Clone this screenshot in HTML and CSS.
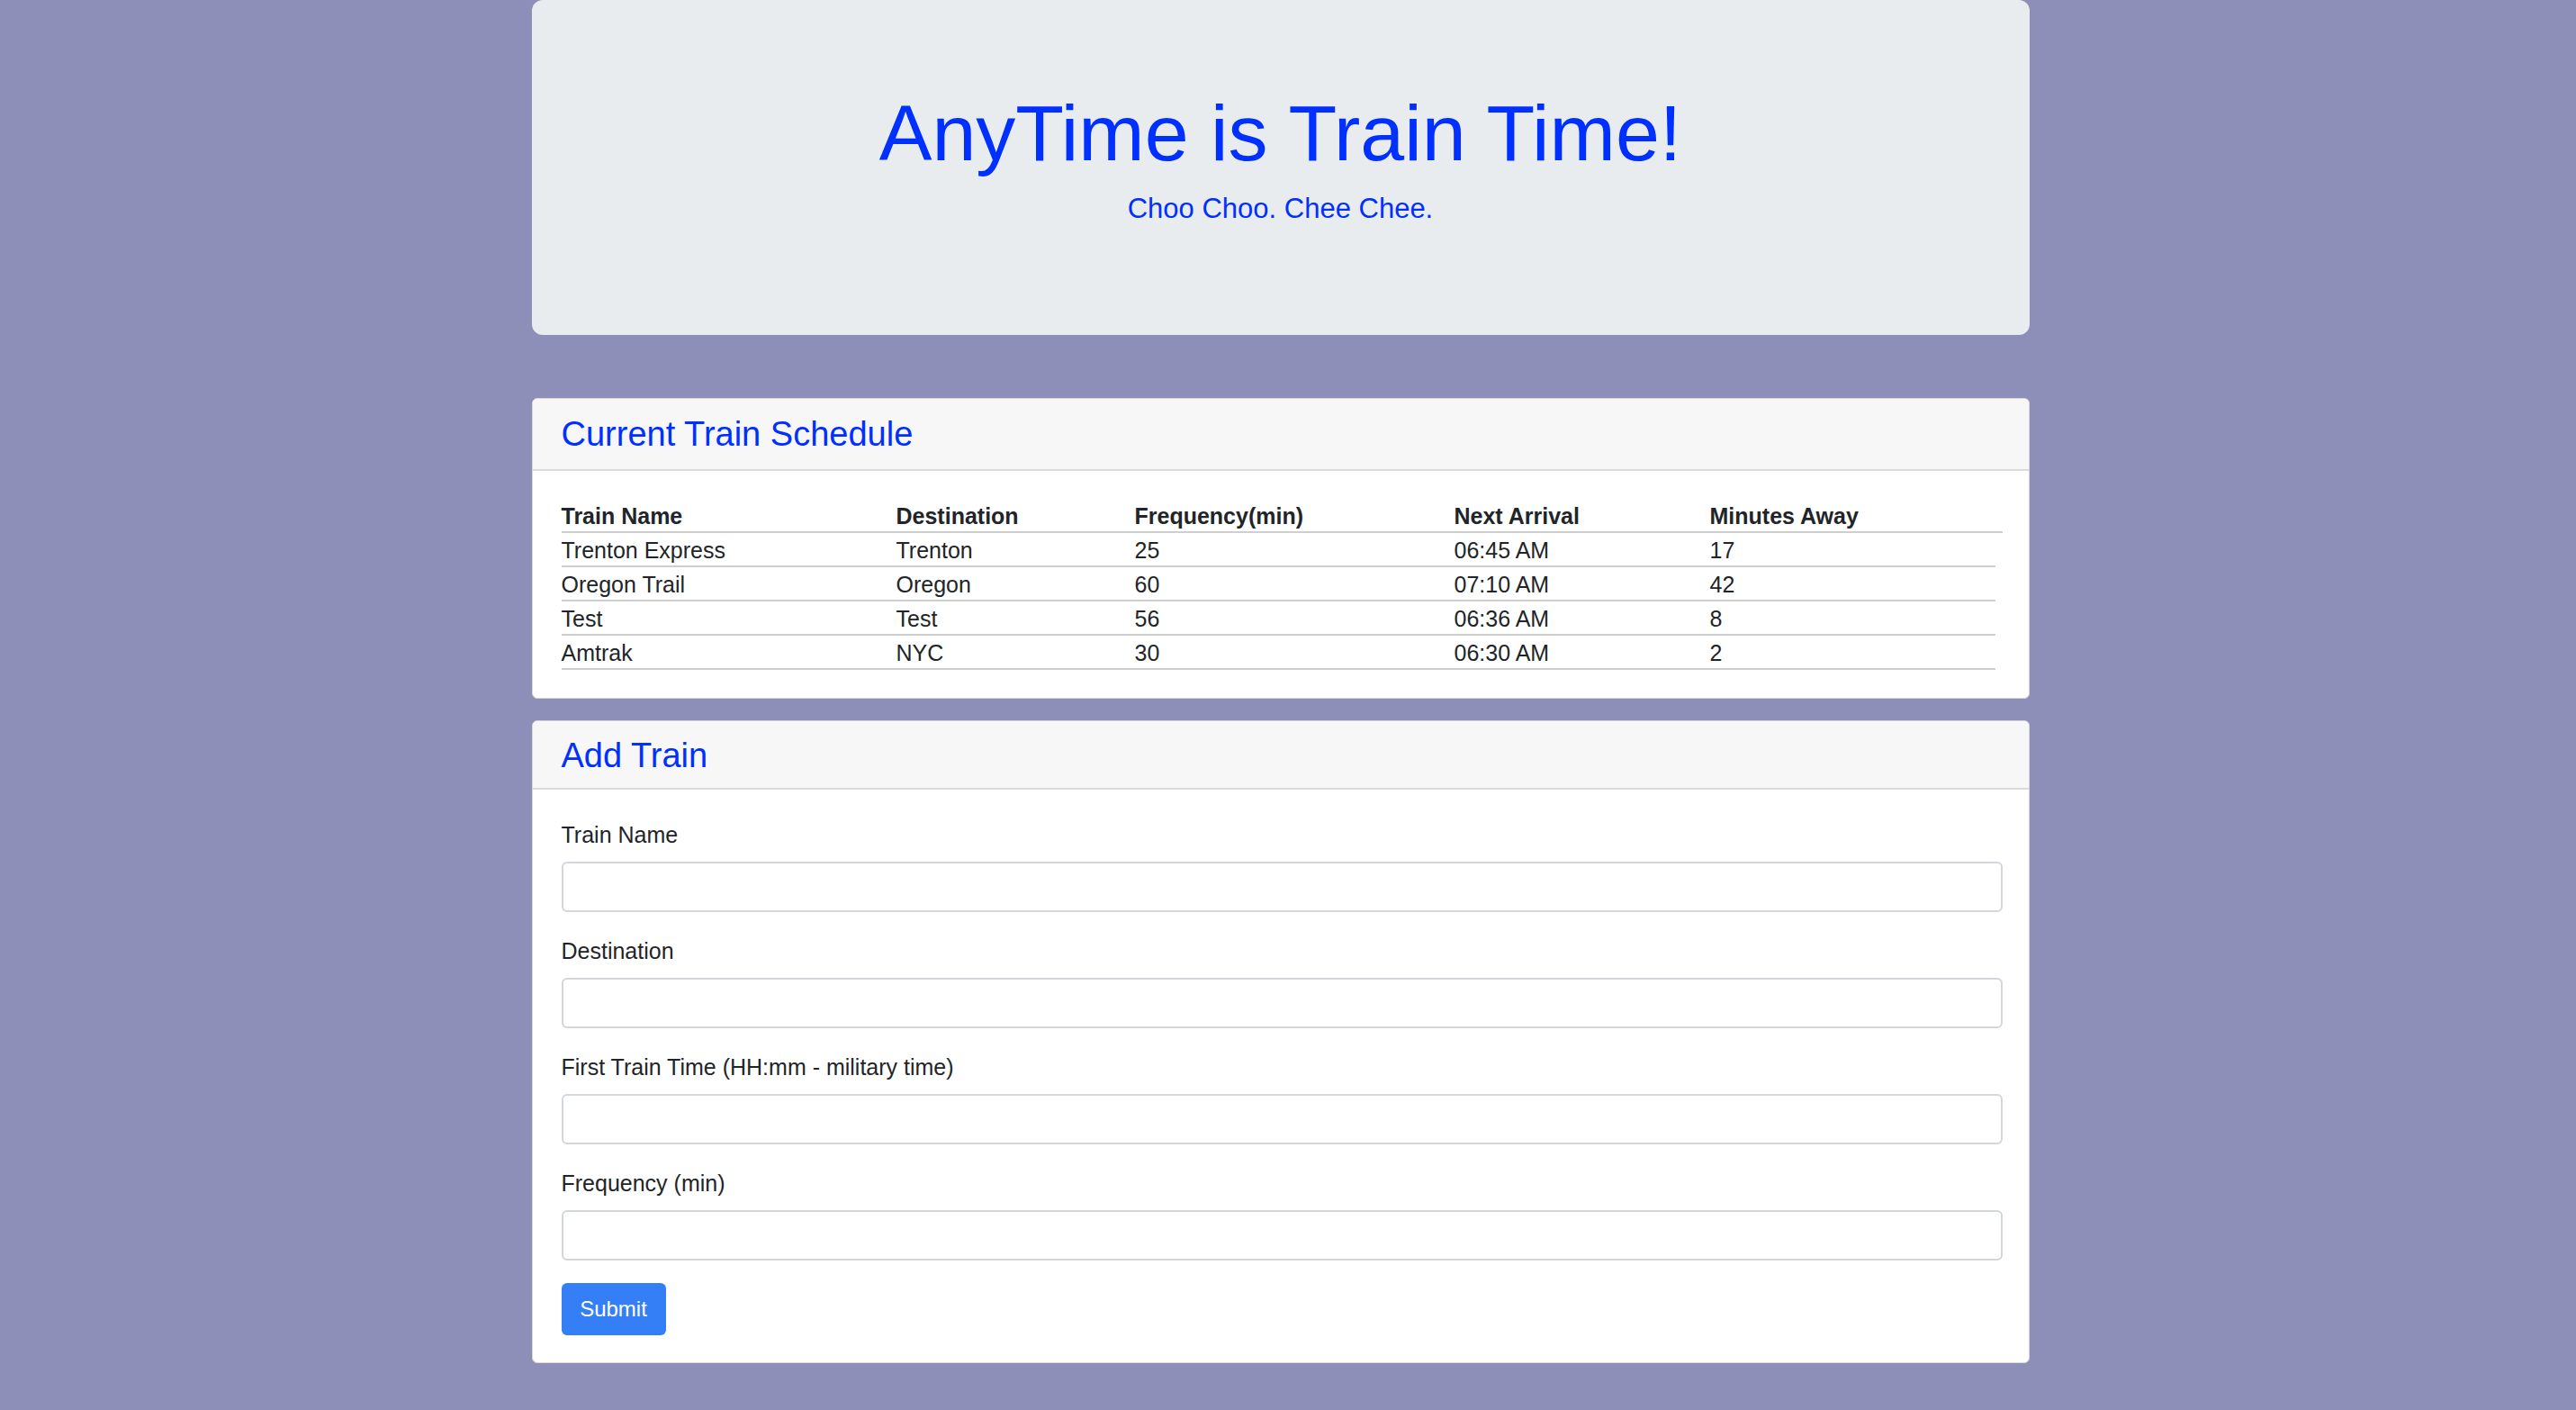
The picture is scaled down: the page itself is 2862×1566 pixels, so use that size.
FILE: index.html
```html
<!DOCTYPE html>
<html lang="en">
<head>
<meta charset="utf-8">
<title>Train Scheduler</title>
<link rel="stylesheet" href="styles.css">
</head>
<body>
<div class="container">
  <header class="jumbotron">
    <h1 class="title">AnyTime is Train Time!</h1>
    <p class="lead">Choo Choo. Chee Chee.</p>
  </header>

  <section class="card card-schedule">
    <div class="card-header"><h2 class="card-title">Current Train Schedule</h2></div>
    <div class="card-body">
      <table class="schedule">
        <colgroup>
          <col class="c1"><col class="c2"><col class="c3"><col class="c4"><col class="c5">
        </colgroup>
        <thead>
          <tr><th>Train Name</th><th>Destination</th><th>Frequency(min)</th><th>Next Arrival</th><th>Minutes Away</th></tr>
        </thead>
        <tbody>
          <tr><td>Trenton Express</td><td>Trenton</td><td>25</td><td>06:45 AM</td><td>17</td></tr>
          <tr><td>Oregon Trail</td><td>Oregon</td><td>60</td><td>07:10 AM</td><td>42</td></tr>
          <tr><td>Test</td><td>Test</td><td>56</td><td>06:36 AM</td><td>8</td></tr>
          <tr><td>Amtrak</td><td>NYC</td><td>30</td><td>06:30 AM</td><td>2</td></tr>
        </tbody>
      </table>
    </div>
  </section>

  <section class="card card-add">
    <div class="card-header"><h2 class="card-title">Add Train</h2></div>
    <form class="card-body">
      <div class="form-group">
        <label class="label" for="name">Train Name</label>
        <input class="input" id="name" type="text">
      </div>
      <div class="form-group">
        <label class="label" for="dest">Destination</label>
        <input class="input" id="dest" type="text">
      </div>
      <div class="form-group">
        <label class="label" for="first">First Train Time (HH:mm - military time)</label>
        <input class="input" id="first" type="text">
      </div>
      <div class="form-group">
        <label class="label" for="freq">Frequency (min)</label>
        <input class="input" id="freq" type="text">
      </div>
      <button class="btn" type="button">Submit</button>
    </form>
  </section>
</div>
</body>
</html>
```

FILE: styles.css
```css
* { box-sizing: border-box; }

html, body {
  margin: 0;
  background: #8e8fb8;
}

body {
  padding: 0 17px 60px 0;
  font-family: "Liberation Sans", Arial, sans-serif;
  font-size: 25px;
  color: #212529;
}

.container {
  width: 1664px;
  margin: 0 auto;
}

.jumbotron {
  height: 372px;
  background: #e9ecef;
  border-radius: 12px;
  padding-top: 95px;
  text-align: center;
  color: #0030ff;
}

.title {
  margin: 0;
  font-size: 88px;
  font-weight: normal;
  line-height: 1.2;
}

.lead {
  margin: 8px 0 0;
  font-size: 31px;
  line-height: 1.5;
}

.card {
  background: #fff;
  border: 1px solid #d6d6d6;
  border-radius: 6px;
  overflow: hidden;
}

.card-schedule { margin-top: 70px; }
.card-add { margin-top: 24px; }

.card-header {
  background: #f7f7f7;
  border-bottom: 2px solid #dadada;
  padding: 17px 32px 15px;
}

.card-add .card-header { padding: 16px 32px 13px; }

.card-title {
  margin: 0;
  font-size: 38px;
  font-weight: normal;
  line-height: 1.2;
  color: #0030ff;
}

.card-body {
  padding: 31px 29px 31px 32px;
}

.card-add .card-body {
  padding: 32px 29px 30px 32px;
}

.schedule {
  width: 1601px;
  table-layout: fixed;
  border-collapse: collapse;
}

.c1 { width: 372px; }
.c2 { width: 265px; }
.c3 { width: 355px; }
.c4 { width: 284px; }
.c5 { width: 325px; }

.schedule th,
.schedule td {
  padding: 2px 0 0;
  line-height: 34px;
  text-align: left;
  white-space: nowrap;
}

.schedule th {
  font-weight: bold;
  border-bottom: 2px solid #cfcfcf;
}

.schedule td {
  padding-bottom: 2px;
  background: linear-gradient(#cfcfcf, #cfcfcf) left bottom / 100% 2px no-repeat;
}

.schedule td:last-child {
  background-size: calc(100% - 8px) 2px;
}

.form-group {
  margin-bottom: 25px;
}

.label {
  display: block;
  line-height: 37px;
  margin-bottom: 11px;
}

.input {
  display: block;
  width: 100%;
  height: 56px;
  border: 2px solid #d3d7db;
  border-radius: 6px;
  background: #fff;
  font: inherit;
  padding: 0 18px;
}

.btn {
  display: block;
  width: 116px;
  height: 58px;
  border: 0;
  border-radius: 6px;
  background: #347ff6;
  color: #fff;
  font-family: inherit;
  font-size: 24px;
  padding: 0;
}
```
